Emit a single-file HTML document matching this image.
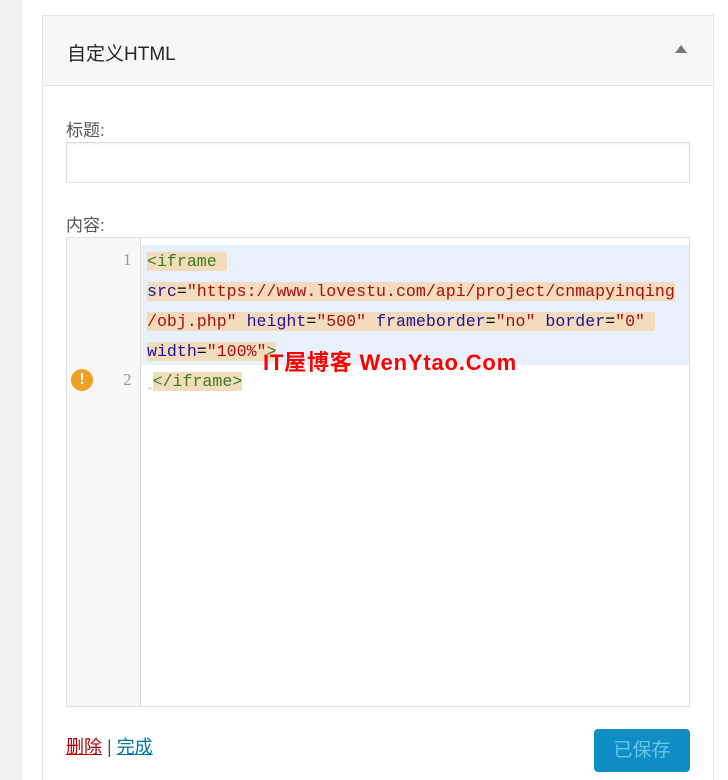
<!DOCTYPE html>
<html><head><meta charset="utf-8"><style>
html,body{margin:0;width:728px;height:780px;overflow:hidden}
body{background:#fff;position:relative;font-family:"Liberation Sans","Noto Sans CJK SC",sans-serif}
.strip{position:absolute;left:0;top:0;width:22px;height:780px;background:#f1f1f1}
.box{position:absolute;left:42px;top:15px;width:670px;height:770px;border:1px solid #e5e5e5;background:#fff}
.hd{position:absolute;left:0;top:0;width:670px;height:69px;background:#f7f7f7;border-bottom:1px solid #e5e5e5}
.hd span{position:absolute;left:24px;top:23px;font-size:19px;color:#23282d}
.tri{position:absolute;left:632px;top:29px;width:0;height:0;border-left:6px solid transparent;border-right:6px solid transparent;border-bottom:8px solid #72777c}
.lbl{position:absolute;font-size:17px;color:#555}
.inp{position:absolute;left:66px;top:142px;width:622px;height:39px;border:1px solid #ddd;box-shadow:inset 0 1px 2px rgba(0,0,0,.07)}
.ed{position:absolute;left:66px;top:237px;width:622px;height:468px;border:1px solid #ddd;background:#fff}
.gut{position:absolute;left:0;top:0;width:73px;height:468px;background:#f7f7f7;border-right:1px solid #ddd}
.sel{position:absolute;left:74px;top:7px;width:548px;height:120px;background:#e8f0fb}
.ln{position:absolute;font-family:"Liberation Serif",serif;font-size:17px;color:#999}
.code{position:absolute;left:80px;font-family:"Liberation Mono",monospace;font-size:16.6px;white-space:pre;line-height:24px}
.h{background:#f2dcbc}
.t{color:#3a7d1a}.a{color:#221199}.s{color:#a11}
.warn{position:absolute;left:4px;top:131px;width:22px;height:22px;border-radius:50%;background:#f0a020;color:#fff;font-weight:bold;font-size:16px;text-align:center;line-height:22px}
.wm{position:absolute;left:263px;top:345px;color:#f00;font-weight:bold;font-size:22px;letter-spacing:0.8px;white-space:nowrap}
.links{position:absolute;left:66px;top:733px;font-size:18px;color:#555}
.links a{text-decoration:underline}
.btn{position:absolute;left:594px;top:729px;width:96px;height:43px;background:#0e8ec4;border-radius:4px;color:#6cc4e8;font-size:19px;text-align:center;line-height:43px}
</style></head><body>
<div class="strip"></div>
<div class="box"><div class="hd"><span>自定义HTML</span><div class="tri"></div></div></div>
<div class="lbl" style="left:66px;top:116px">标题:</div>
<div class="inp"></div>
<div class="lbl" style="left:66px;top:211px">内容:</div>
<div class="ed">
<div class="gut"></div>
<div class="sel"></div>
<div class="ln" style="left:56px;top:12px">1</div>
<div class="ln" style="left:56px;top:132px">2</div>
<div class="warn">!</div>
<div class="code" style="top:12px"><span class="h t">&lt;iframe </span></div>
<div class="code" style="top:42px"><span class="h"><span class="a">src</span>=<span class="s">"https://www.lovestu.com/api/project/cnmapyinqing</span></span></div>
<div class="code" style="top:72px"><span class="h"><span class="s">/obj.php"</span> <span class="a">height</span>=<span class="s">"500"</span> <span class="a">frameborder</span>=<span class="s">"no"</span> <span class="a">border</span>=<span class="s">"0"</span> </span></div>
<div class="code" style="top:102px"><span class="h"><span class="a">width</span>=<span class="s">"100%"</span><span class="t">&gt;</span></span></div>
<div class="code" style="top:132px"><span style="color:#cc9">‸</span><span class="h t">&lt;/iframe&gt;</span></div>
</div>
<div class="wm">IT屋博客 WenYtao.Com</div>
<div class="links"><a style="color:#a00">删除</a> | <a style="color:#0073aa">完成</a></div>
<div class="btn">已保存</div>
</body></html>
